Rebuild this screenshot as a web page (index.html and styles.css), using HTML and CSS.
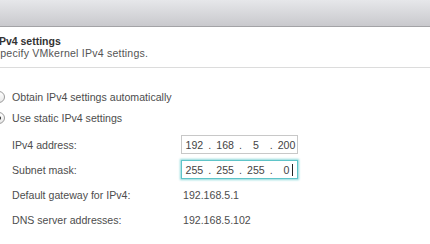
FILE: index.html
```html
<!DOCTYPE html>
<html lang="en">
<head>
    <meta charset="UTF-8">
    <title>IPv4 settings</title>
    <link rel="stylesheet" href="styles.css">
</head>
<body>
    <div class="titlebar"></div>

    <div class="page-header">
        <div class="page-title">IPv4 settings</div>
        <div class="page-desc">Specify VMkernel IPv4 settings.</div>
    </div>

    <div class="content">
        <label class="radio-row">
            <span class="radio"></span>
            <span>Obtain IPv4 settings automatically</span>
        </label>
        <label class="radio-row">
            <span class="radio checked"></span>
            <span>Use static IPv4 settings</span>
        </label>

        <div class="fields">
            <div class="field">
                <span class="field-label">IPv4 address:</span>
                <div class="ip-box">
                    <span class="oct">192</span><span class="dot">.</span>
                    <span class="oct">168</span><span class="dot">.</span>
                    <span class="oct">5</span><span class="dot">.</span>
                    <span class="oct">200</span>
                </div>
            </div>
            <div class="field">
                <span class="field-label">Subnet mask:</span>
                <div class="ip-box focused">
                    <span class="oct">255</span><span class="dot">.</span>
                    <span class="oct">255</span><span class="dot">.</span>
                    <span class="oct">255</span><span class="dot">.</span>
                    <span class="oct">0<span class="caret"></span></span>
                </div>
            </div>
            <div class="field">
                <span class="field-label">Default gateway for IPv4:</span>
                <span class="field-value">192.168.5.1</span>
            </div>
            <div class="field">
                <span class="field-label">DNS server addresses:</span>
                <span class="field-value">192.168.5.102</span>
            </div>
        </div>
    </div>
</body>
</html>
```

FILE: styles.css
```css
body {
    margin: 0;
    width: 430px;
    height: 244px;
    overflow: hidden;
    background: #fff;
    font-family: "Liberation Sans", Arial, sans-serif;
    font-size: 10.6px;
    color: #4d4d4d;
}
.titlebar {
    height: 26px;
    background: linear-gradient(#e6e7ea, #c9c9cd);
    border-bottom: 1px solid #a3a3a6;
}
.page-header {
    margin-left: -4px;
    padding: 8px 0 8px;
    border-bottom: 1px solid #dcdcdc;
}
.page-title {
    font-size: 10.5px;
    font-weight: bold;
    color: #333;
    line-height: 12px;
}
.page-desc {
    margin-left: -3px;
    line-height: 12px;
    color: #555;
    letter-spacing: 0.2px;
}
.content {
    padding-top: 18px;
}
.radio-row {
    display: flex;
    align-items: center;
    gap: 7px;
    height: 21px;
    margin-left: -7px;
}
.radio {
    width: 10px;
    height: 10px;
    border: 1px solid #9a9a9a;
    border-radius: 50%;
    background: linear-gradient(#fff, #e8e8e8);
    display: flex;
    align-items: center;
    justify-content: center;
}
.radio.checked::after {
    content: "";
    width: 4px;
    height: 4px;
    border-radius: 50%;
    background: #333;
}
.fields {
    padding-left: 12px;
    padding-top: 4px;
}
.field {
    display: flex;
    align-items: center;
    height: 25px;
}
.field-label {
    width: 169px;
}
.field-value {
    padding-left: 2px;
}
.ip-box {
    width: 113px;
    height: 17px;
    border: 1px solid #c8c8c8;
    display: flex;
    align-items: center;
    padding-left: 2px;
    color: #444;
}
.ip-box.focused {
    border-color: #5fc4c8;
    box-shadow: 0 0 2px 1px #8fd8da;
}
.oct {
    width: 21px;
    text-align: center;
    position: relative;
}
.dot {
    width: 10px;
    text-align: center;
}
.caret {
    position: absolute;
    right: 4px;
    top: 0;
    width: 1px;
    height: 12px;
    background: #222;
}
```
